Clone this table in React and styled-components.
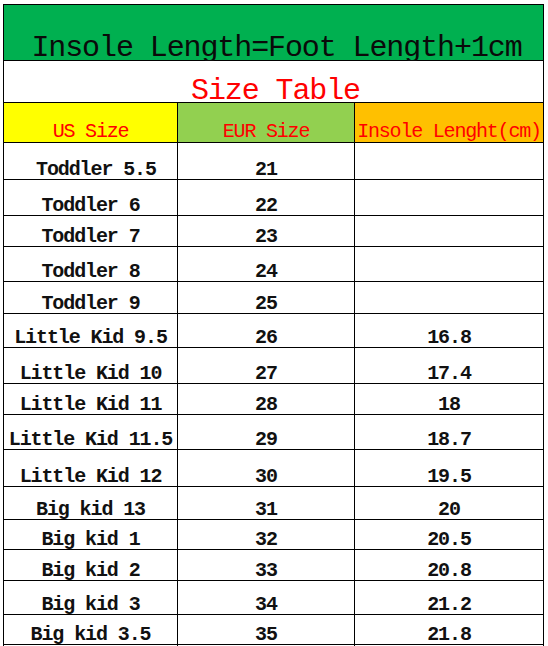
import React from 'react';
import styled, { createGlobalStyle } from 'styled-components';

const GlobalStyle = createGlobalStyle`
  body {
    margin: 0;
    background: #fff;
  }
`

const Page = styled.div`
  padding: 4px 0 0 3px;
  height: 642px;
  overflow: hidden;
  font-family: "Liberation Mono", "DejaVu Sans Mono", monospace;
`

const Sheet = styled.div`
  display: grid;
  grid-template-columns: 173px 176px 188px;
  gap: 1px;
  padding: 1px;
  background: #000;
  width: fit-content;
`

const Cell = styled.div`
  height: ${p => p.$h}px;
  background: ${p => p.$bg || '#fff'};
  display: flex;
  align-items: flex-end;
  justify-content: center;
  white-space: pre;
  font-size: 20px;
  line-height: 18px;
  letter-spacing: -1.1px;
  font-weight: bold;
  color: #111;
`

const Title = styled(Cell)`
  grid-column: 1 / -1;
  font-size: 30px;
  line-height: 24px;
  font-weight: normal;
  color: #0a0a0a;
  padding-left: 6px;
`

const Subtitle = styled(Title)`
  color: #f00;
  line-height: 22px;
  padding-left: 4px;
`

const HeadCell = styled(Cell)`
  font-weight: normal;
  color: #f00;
  line-height: 20px;
  letter-spacing: -1.2px;
`

const rows = [
  [' Toddler 5.5', '21', '', 36],
  ['Toddler 6', '22', '', 35],
  ['Toddler 7', '23', '', 30],
  ['Toddler 8', '24', '', 34],
  ['Toddler 9', '25', '', 31],
  ['Little Kid 9.5', '26', '16.8', 33],
  ['Little Kid 10', '27', '17.4', 35],
  ['Little Kid 11', '28', '18', 30],
  ['Little Kid 11.5', '29', '18.7', 34],
  ['Little Kid 12', '30', '19.5', 36],
  ['Big kid 13', '31', '20', 32],
  ['Big kid 1', '32', '20.5', 29],
  ['Big kid 2', '33', '20.8', 30],
  ['Big kid 3', '34', '21.2', 33],
  ['Big kid 3.5', '35', '21.8', 29],
  ['', '', '', 30],
]

const App = () => {
  return (
    <Page>
      <GlobalStyle />
      <Sheet>
        <Title $h={55} $bg="#00b050">Insole Length=Foot Length+1cm</Title>
        <Subtitle $h={41}>Size Table</Subtitle>
        <HeadCell $h={39} $bg="#ffff00">US Size</HeadCell>
        <HeadCell $h={39} $bg="#92d050">EUR Size</HeadCell>
        <HeadCell $h={39} $bg="#ffc000">Insole Lenght(cm)</HeadCell>
        {rows.map(([us, eur, insole, h], i) => (
          <React.Fragment key={i}>
            <Cell $h={h}>{us}</Cell>
            <Cell $h={h}>{eur}</Cell>
            <Cell $h={h}>{insole}</Cell>
          </React.Fragment>
        ))}
      </Sheet>
    </Page>
  )
}

export default App
